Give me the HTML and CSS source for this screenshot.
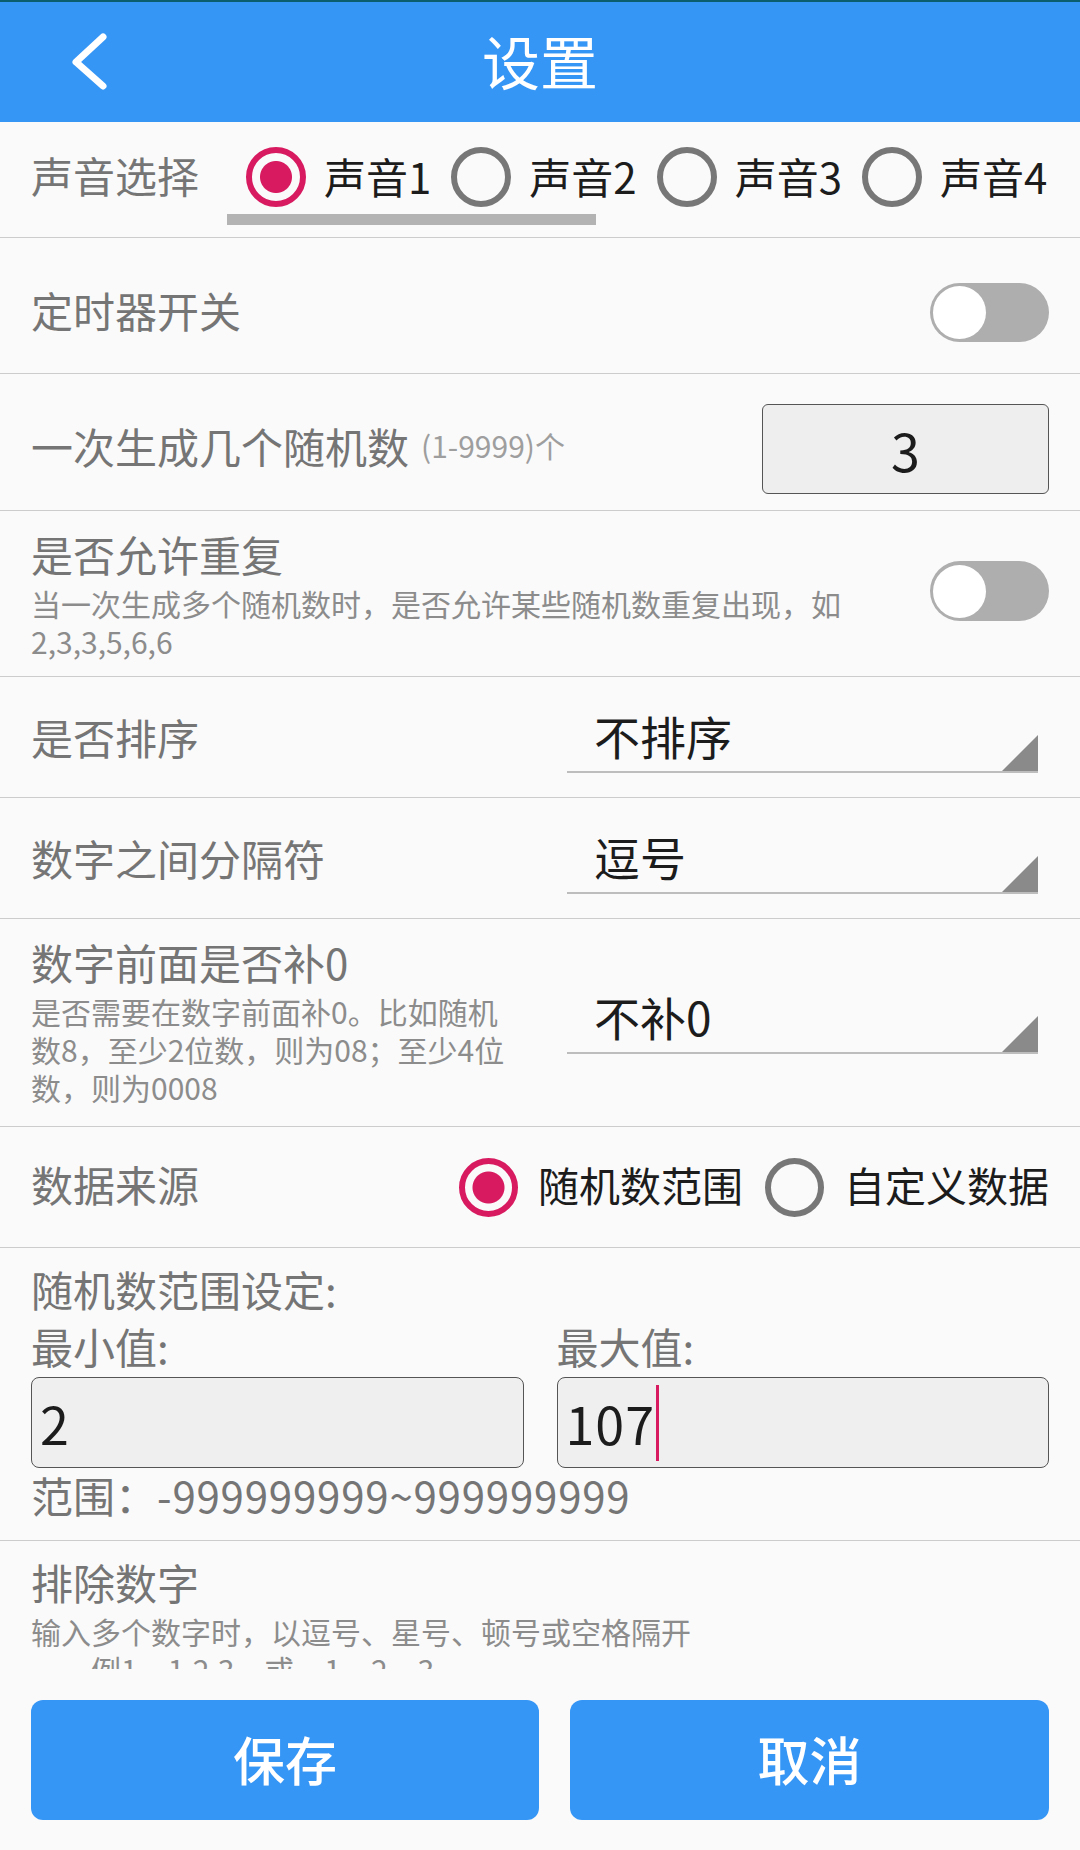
FILE: index.html
```html
<!DOCTYPE html>
<html lang="zh-CN">
<head>
<meta charset="utf-8">
<title>设置</title>
<link rel="stylesheet" href="styles.css">
</head>
<body>
<div class="topstrip"></div>
<header class="appbar">
  <div class="back">
    <svg width="40" height="60" viewBox="0 0 40 60"><polyline points="35,5 8,30 35,54" fill="none" stroke="#ffffff" stroke-width="7" stroke-linecap="round" stroke-linejoin="round"/></svg>
  </div>
  <h1 class="title">设置</h1>
  <div></div>
</header>

<main class="scroll">
  <section class="row row-sound">
    <span class="label label-sound">声音选择</span>
    <div class="sound-scroller">
      <div class="radio-group sound-group">
        <div class="radio-item"><span class="radio checked"></span><span class="radio-text">声音1</span></div>
        <div class="radio-item"><span class="radio"></span><span class="radio-text">声音2</span></div>
        <div class="radio-item"><span class="radio"></span><span class="radio-text">声音3</span></div>
        <div class="radio-item"><span class="radio"></span><span class="radio-text">声音4</span></div>
      </div>
      <div class="hscrollbar"></div>
    </div>
  </section>

  <section class="row row-timer">
    <span class="label label-toggle">定时器开关</span>
    <div class="toggle"><span class="thumb"></span></div>
  </section>

  <section class="row row-count">
    <div class="count-label">
      <span class="label">一次生成几个随机数</span>
      <span class="hint">(1-9999)个</span>
    </div>
    <div class="numbox">3</div>
  </section>

  <section class="row row-multi row-repeat">
    <div class="col col-wide">
      <div class="title-line">是否允许重复</div>
      <div class="desc">当一次生成多个随机数时，是否允许某些随机数重复出现，如2,3,3,5,6,6</div>
    </div>
    <div class="toggle toggle-repeat"><span class="thumb"></span></div>
  </section>

  <section class="row row-select">
    <span class="label">是否排序</span>
    <div class="dropdown"><span class="dd-text">不排序</span><span class="dd-arrow"></span></div>
  </section>

  <section class="row row-select">
    <span class="label">数字之间分隔符</span>
    <div class="dropdown"><span class="dd-text">逗号</span><span class="dd-arrow"></span></div>
  </section>

  <section class="row row-multi row-pad">
    <div class="col col-narrow">
      <div class="title-line">数字前面是否补0</div>
      <div class="desc">是否需要在数字前面补0。比如随机数8，至少2位数，则为08；至少4位数，则为0008</div>
    </div>
    <div class="dropdown"><span class="dd-text">不补0</span><span class="dd-arrow"></span></div>
  </section>

  <section class="row row-source">
    <span class="label">数据来源</span>
    <div class="radio-group source-group">
      <div class="radio-item"><span class="radio checked"></span><span class="radio-text">随机数范围</span></div>
      <div class="radio-item"><span class="radio"></span><span class="radio-text">自定义数据</span></div>
    </div>
  </section>

  <section class="block block-range">
    <div class="block-title">随机数范围设定:</div>
    <div class="range-grid">
      <div class="range-field">
        <div class="field-label">最小值:</div>
        <div class="field-input"><span class="field-value">2</span></div>
      </div>
      <div class="range-field">
        <div class="field-label">最大值:</div>
        <div class="field-input"><span class="field-value">107</span><span class="caret"></span></div>
      </div>
    </div>
    <div class="range-note">范围：<span class="range-digits">-999999999~999999999</span></div>
  </section>

  <section class="block block-exclude">
    <div class="title-line">排除数字</div>
    <div class="desc">输入多个数字时，以逗号、星号、顿号或空格隔开<br>　　例1，1,2,3，或，1、2、3</div>
  </section>
</main>

<footer class="footer">
  <button class="btn">保存</button>
  <button class="btn">取消</button>
</footer>
</body>
</html>
```

FILE: styles.css
```css
* {
  box-sizing: border-box;
  margin: 0;
  padding: 0;
}

html, body {
  width: 1080px;
  height: 1850px;
}

body {
  background: #fafafa;
  font-family: "Noto Sans CJK SC", "Noto Sans", sans-serif;
  color: #757575;
  overflow: hidden;
  display: flex;
  flex-direction: column;
}

.topstrip {
  height: 2px;
  background: #0b5e6e;
}

.appbar {
  height: 120px;
  background: #3696f6;
  display: grid;
  grid-template-columns: 1fr auto 1fr;
  align-items: center;
}

.back {
  margin-left: 68px;
  width: 40px;
  height: 60px;
  display: flex;
}

.title {
  font-size: 58px;
  font-weight: 400;
  line-height: 1;
  padding-bottom: 4px;
  color: #ffffff;
}

.scroll {
  height: 1547px;
  overflow: hidden;
}

.row {
  display: flex;
  align-items: center;
  padding: 0 31px;
  border-bottom: 1px solid #cccccc;
}

.label {
  font-size: 42px;
  line-height: 54px;
  padding-bottom: 6px;
  color: #757575;
  white-space: nowrap;
}

/* sound row */
.row-sound {
  align-items: flex-start;
  padding-top: 25px;
  padding-bottom: 12px;
}

.label-sound {
  line-height: 56px;
  padding-bottom: 0;
}

.sound-scroller {
  margin-left: 28px;
  display: flex;
  flex-direction: column;
}

.sound-group {
  padding-left: 19px;
}

.hscrollbar {
  margin-top: 7px;
  width: 369px;
  height: 11px;
  background: #b3b3b3;
}

.radio-group {
  display: flex;
  align-items: center;
  gap: 20px;
}

.radio-item {
  display: flex;
  align-items: center;
  gap: 18px;
}

.radio {
  width: 60px;
  height: 60px;
  border-radius: 50%;
  border: 6px solid #777777;
  flex: none;
}

.radio.checked {
  border-color: #d81b60;
  background: radial-gradient(circle, #d81b60 0 15.5px, transparent 16.5px);
}

.radio-text {
  font-size: 42px;
  line-height: 57px;
  padding-bottom: 3px;
  color: #1c1c1c;
  white-space: nowrap;
}

/* toggle */
.row-timer {
  padding-top: 45px;
  padding-bottom: 31px;
}

.label-toggle {
  line-height: 53px;
}

.toggle {
  margin-left: auto;
  width: 119px;
  height: 59px;
  padding: 3px;
  border-radius: 30px;
  background: #aeaeae;
  display: flex;
  align-items: center;
  flex: none;
}

.thumb {
  width: 53px;
  height: 53px;
  border-radius: 50%;
  background: #ffffff;
}

.toggle-repeat {
  height: 60px;
  margin-bottom: 6px;
}

/* count row */
.row-count {
  padding-top: 30px;
  padding-bottom: 16px;
}

.count-label {
  display: flex;
  align-items: center;
}

.count-label .label {
  line-height: 84px;
}

.hint {
  margin-left: 12px;
  padding-bottom: 8px;
  font-size: 30px;
  line-height: 40px;
  color: #9e9e9e;
  white-space: nowrap;
}

.numbox {
  margin-left: auto;
  width: 287px;
  height: 90px;
  border: 1px solid #555555;
  border-radius: 6px;
  background: #eeeeee;
  display: flex;
  align-items: center;
  justify-content: center;
  font-size: 52px;
  color: #1c1c1c;
}

/* multi-line rows */
.row-multi {
  padding-top: 17px;
}

.row-repeat {
  padding-bottom: 16px;
}

.row-pad {
  padding-bottom: 20px;
}

.col-wide {
  width: 820px;
}

.col-narrow {
  width: 485px;
}

.title-line {
  font-size: 42px;
  line-height: 52px;
  color: #757575;
}

.desc {
  margin-top: 4px;
  font-size: 30px;
  line-height: 38px;
  color: #8c8c8c;
}

/* dropdowns */
.row-select {
  padding-top: 30px;
  padding-bottom: 24px;
}

.dropdown {
  margin-left: auto;
  margin-right: 11px;
  width: 471px;
  height: 66px;
  border-bottom: 2px solid #bdbdbd;
  display: flex;
  flex: none;
}

.dd-text {
  flex: 1;
  padding-left: 27px;
  font-size: 46px;
  line-height: 56px;
  color: #1c1c1c;
}

.dd-arrow {
  align-self: flex-end;
  width: 36px;
  height: 36px;
  background: #8a8a8a;
  clip-path: polygon(100% 0, 100% 100%, 0 100%);
}

/* data source */
.row-source {
  padding-top: 30px;
  padding-bottom: 30px;
}

.source-group {
  margin-left: auto;
  gap: 22px;
}

.source-group .radio-item {
  gap: 20px;
}

.source-group .radio {
  width: 59px;
  height: 59px;
}

.source-group .radio-text {
  font-size: 41px;
  line-height: 54px;
  padding-bottom: 6px;
}

/* range block */
.block {
  padding: 0 31px;
  border-bottom: 1px solid #cccccc;
}

.block-range {
  padding-top: 16px;
  padding-bottom: 20px;
}

.block-title {
  font-size: 42px;
  line-height: 50px;
  color: #757575;
}

.range-grid {
  display: grid;
  grid-template-columns: 1fr 1fr;
  column-gap: 33px;
}

.field-label {
  margin-top: 6px;
  font-size: 42px;
  line-height: 52px;
  color: #757575;
}

.field-input {
  margin-top: 5px;
  height: 91px;
  border: 1px solid #555555;
  border-radius: 8px;
  background: #efefef;
  display: flex;
  align-items: center;
  padding-left: 8px;
}

.field-value {
  font-size: 52px;
  line-height: 60px;
  letter-spacing: 1px;
  color: #1c1c1c;
}

.caret {
  margin-left: 1px;
  width: 3px;
  height: 76px;
  background: #d81b60;
}

.range-note {
  margin-top: 2px;
  font-size: 42px;
  line-height: 50px;
  color: #757575;
  white-space: nowrap;
}

.range-digits {
  letter-spacing: 0.8px;
}

.block-exclude {
  padding-top: 15px;
  border-bottom: none;
}

/* footer */
.footer {
  height: 181px;
  padding: 31px 31px 30px;
  display: grid;
  grid-template-columns: 508fr 479fr;
  column-gap: 31px;
}

.btn {
  height: 120px;
  border: none;
  border-radius: 12px;
  background: #3696f6;
  color: #ffffff;
  font-family: "Noto Sans CJK SC", "Noto Sans", sans-serif;
  font-size: 52px;
  font-weight: 500;
  padding-bottom: 3px;
}
```
